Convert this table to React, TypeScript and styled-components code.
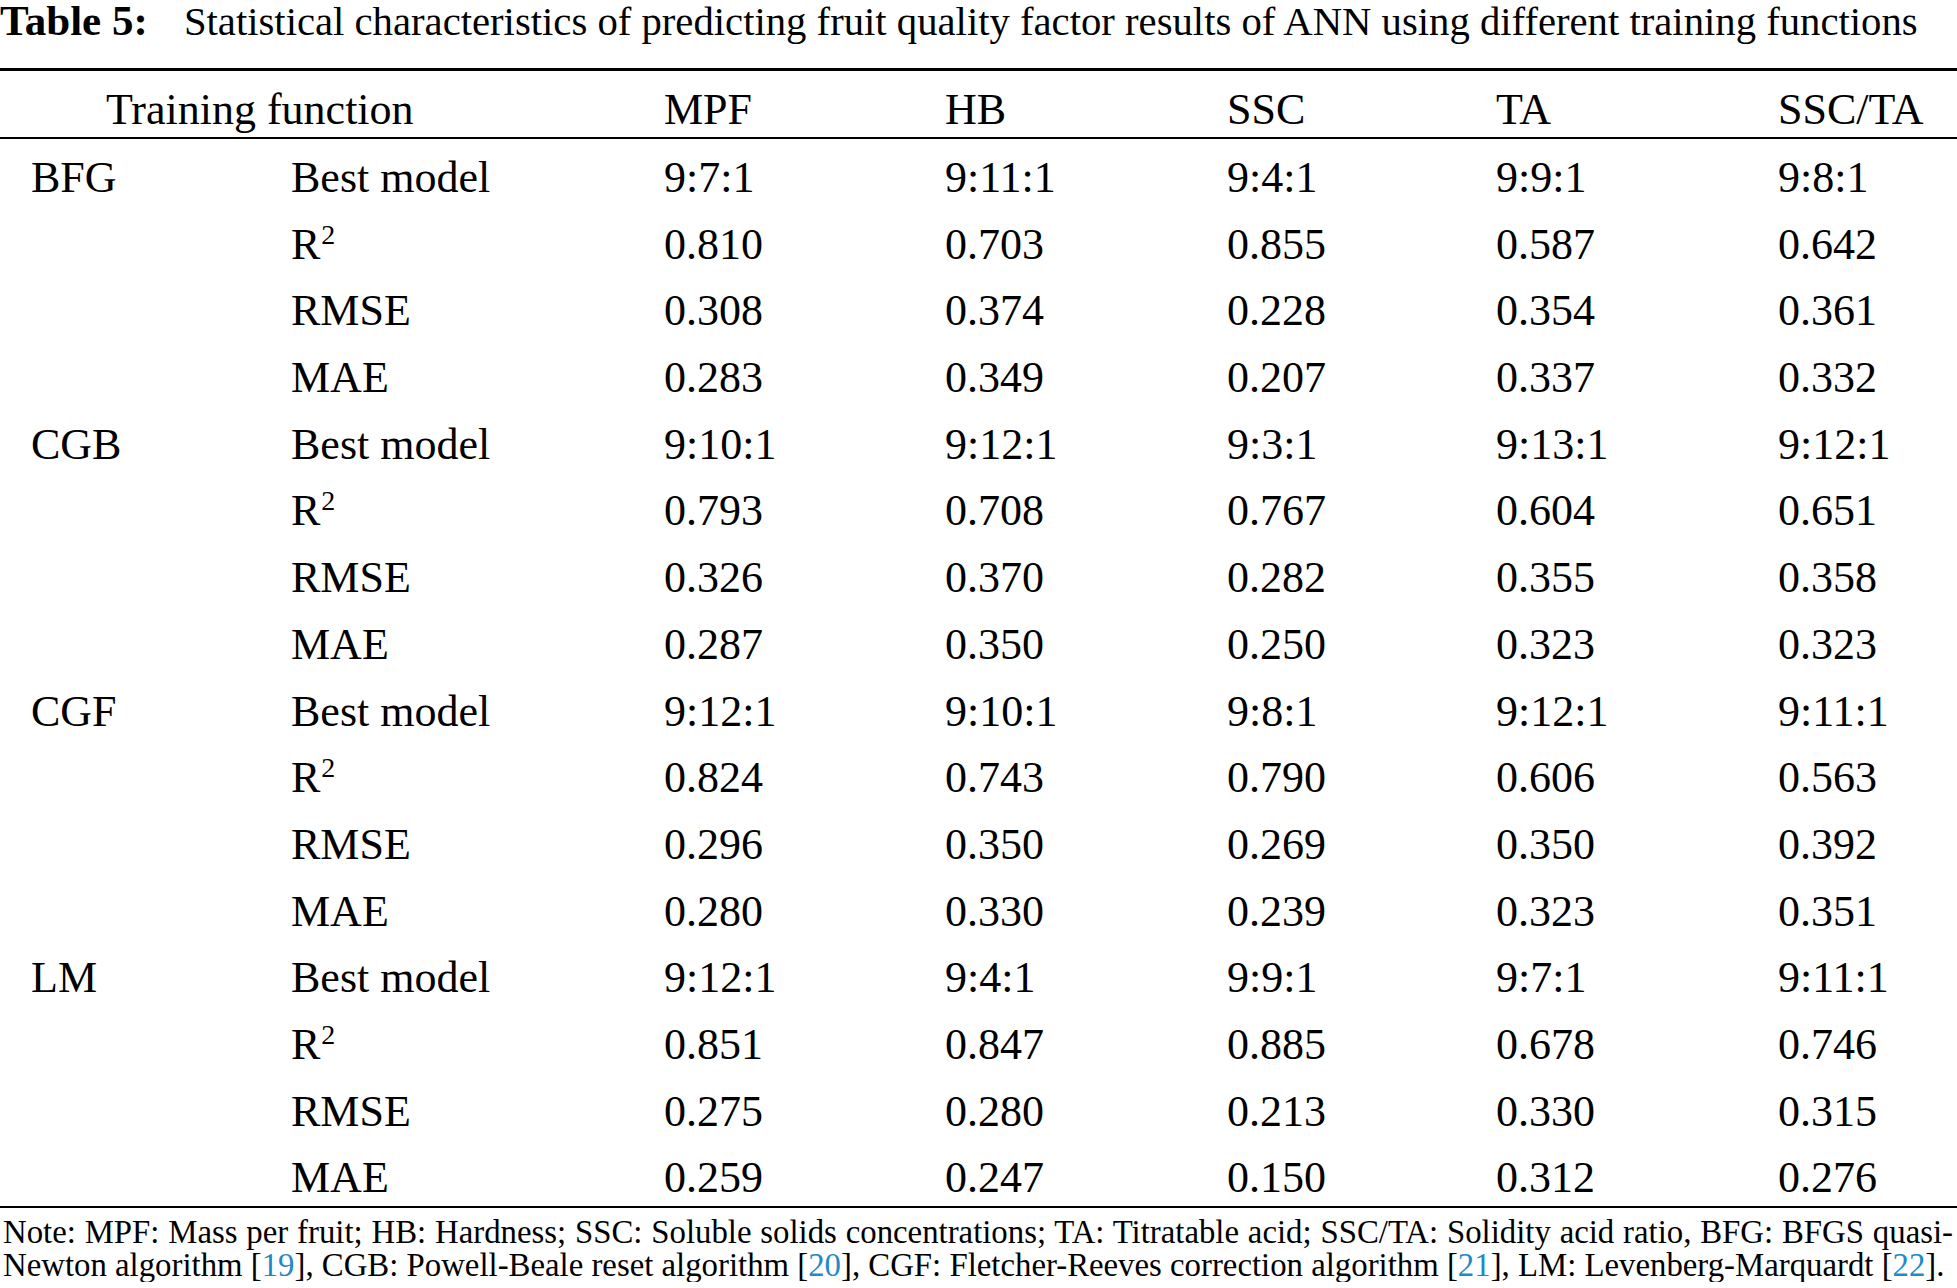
import React from "react";
import styled, { createGlobalStyle } from "styled-components";

/* --- Global --- */

const GlobalStyle = createGlobalStyle`
  html, body {
    margin: 0;
    padding: 0;
    background: #ffffff;
  }
  body {
    font-family: "Liberation Serif", "Times New Roman", serif;
    color: #000000;
  }
`;

/* --- Styled Components --- */

const Page = styled.div`
  width: 1957px;
`;

const Caption = styled.div`
  font-size: 40.7px;
  line-height: 42px;
  white-space: nowrap;
`;

const CaptionLabel = styled.span`
  font-size: 43px;
  font-weight: 700;
  margin-right: 26px;
`;

const Rule = styled.div<{ $weight: number }>`
  height: ${(p) => p.$weight}px;
  background: #000000;
`;

const TopRule = styled(Rule)`
  margin-top: 25px;
`;

const Grid = styled.div`
  display: grid;
  grid-template-columns: 291px 373px 281px 282px 269px 282px 179px;
  font-size: 44px;
  line-height: 44px;
`;

const HeaderRow = styled(Grid)`
  height: 66px;
`;

const HeaderCell = styled.div<{ $span?: number; $indent?: number }>`
  grid-column: span ${(p) => p.$span ?? 1};
  padding-top: 17px;
  padding-left: ${(p) => p.$indent ?? 0}px;
  white-space: nowrap;
`;

const Body = styled(Grid)`
  grid-auto-rows: 66.7px;
`;

const Cell = styled.div<{ $indent?: number }>`
  padding-top: 17px;
  padding-left: ${(p) => p.$indent ?? 0}px;
  white-space: nowrap;
`;

const Sup = styled.span`
  font-size: 28px;
  vertical-align: 15px;
  line-height: 0;
  margin-left: 1px;
`;

const Notes = styled.div`
  margin-top: 8px;
  padding: 0 4px 0 3px;
  font-size: 32.8px;
  line-height: 33px;
`;

const NoteLine = styled.div<{ $justify?: boolean }>`
  white-space: ${(p) => (p.$justify ? "normal" : "nowrap")};
  text-align: ${(p) => (p.$justify ? "justify" : "left")};
  text-align-last: ${(p) => (p.$justify ? "justify" : "auto")};
`;

const Ref = styled.span`
  color: #1f8ac6;
`;

/* --- Data --- */

const columns = ["MPF", "HB", "SSC", "TA", "SSC/TA"];

type Group = {
  name: string;
  best: string[];
  r2: string[];
  rmse: string[];
  mae: string[];
};

const groups: Group[] = [
  {
    name: "BFG",
    best: ["9:7:1", "9:11:1", "9:4:1", "9:9:1", "9:8:1"],
    r2: ["0.810", "0.703", "0.855", "0.587", "0.642"],
    rmse: ["0.308", "0.374", "0.228", "0.354", "0.361"],
    mae: ["0.283", "0.349", "0.207", "0.337", "0.332"],
  },
  {
    name: "CGB",
    best: ["9:10:1", "9:12:1", "9:3:1", "9:13:1", "9:12:1"],
    r2: ["0.793", "0.708", "0.767", "0.604", "0.651"],
    rmse: ["0.326", "0.370", "0.282", "0.355", "0.358"],
    mae: ["0.287", "0.350", "0.250", "0.323", "0.323"],
  },
  {
    name: "CGF",
    best: ["9:12:1", "9:10:1", "9:8:1", "9:12:1", "9:11:1"],
    r2: ["0.824", "0.743", "0.790", "0.606", "0.563"],
    rmse: ["0.296", "0.350", "0.269", "0.350", "0.392"],
    mae: ["0.280", "0.330", "0.239", "0.323", "0.351"],
  },
  {
    name: "LM",
    best: ["9:12:1", "9:4:1", "9:9:1", "9:7:1", "9:11:1"],
    r2: ["0.851", "0.847", "0.885", "0.678", "0.746"],
    rmse: ["0.275", "0.280", "0.213", "0.330", "0.315"],
    mae: ["0.259", "0.247", "0.150", "0.312", "0.276"],
  },
];

/* --- Component --- */

export default function App() {
  return (
    <>
      <GlobalStyle />
      <Page>
        <Caption>
          <CaptionLabel>Table 5:</CaptionLabel> Statistical characteristics of
          predicting fruit quality factor results of ANN using different
          training functions
        </Caption>

        <TopRule $weight={3} />
        <HeaderRow>
          <HeaderCell $span={2} $indent={106}>
            Training function
          </HeaderCell>
          {columns.map((c) => (
            <HeaderCell key={c}>{c}</HeaderCell>
          ))}
        </HeaderRow>
        <Rule $weight={2} />

        <Body>
          {groups.map((g) => (
            <React.Fragment key={g.name}>
              <Cell $indent={31}>{g.name}</Cell>
              <Cell>Best model</Cell>
              {g.best.map((v, i) => (
                <Cell key={`b${i}`}>{v}</Cell>
              ))}

              <Cell />
              <Cell>
                R<Sup>2</Sup>
              </Cell>
              {g.r2.map((v, i) => (
                <Cell key={`r${i}`}>{v}</Cell>
              ))}

              <Cell />
              <Cell>RMSE</Cell>
              {g.rmse.map((v, i) => (
                <Cell key={`s${i}`}>{v}</Cell>
              ))}

              <Cell />
              <Cell>MAE</Cell>
              {g.mae.map((v, i) => (
                <Cell key={`m${i}`}>{v}</Cell>
              ))}
            </React.Fragment>
          ))}
        </Body>
        <Rule $weight={2} />

        <Notes>
          <NoteLine $justify>
            Note: MPF: Mass per fruit; HB: Hardness; SSC: Soluble solids
            concentrations; TA: Titratable acid; SSC/TA: Solidity acid ratio,
            BFG: BFGS quasi-
          </NoteLine>
          <NoteLine>
            Newton algorithm [<Ref>19</Ref>], CGB: Powell-Beale reset algorithm
            [<Ref>20</Ref>], CGF: Fletcher-Reeves correction algorithm [
            <Ref>21</Ref>], LM: Levenberg-Marquardt [<Ref>22</Ref>].
          </NoteLine>
        </Notes>
      </Page>
    </>
  );
}
